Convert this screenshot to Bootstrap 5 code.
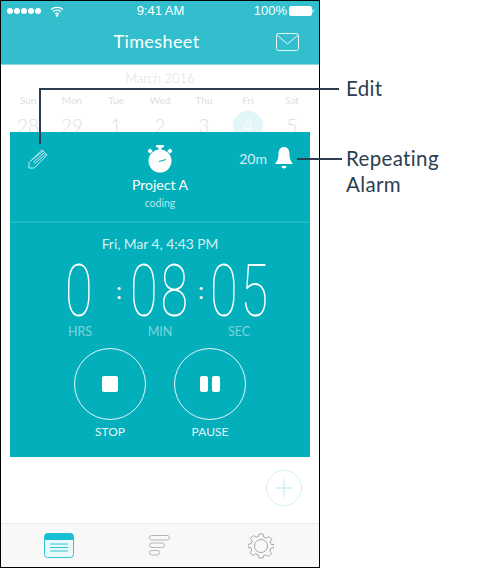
<!DOCTYPE html>
<html lang="en">
<head>
<meta charset="utf-8">
<title>Timesheet</title>
<link href="https://cdn.jsdelivr.net/npm/bootstrap@5.3.0/dist/css/bootstrap.min.css" rel="stylesheet">
<style>
    html, body { margin: 0; height: 569px; overflow: hidden; background: #fff; }
    body { font-family: Lato, "Open Sans", sans-serif; }
    .page-wrap { position: relative; width: 500px; height: 569px; }
    .phone-frame {
        width: 320px; height: 568px;
        border: 1px solid #000;
        display: flex; flex-direction: column;
        overflow: hidden;
    }
    .top-bar { background: #33bece; color: #fff; height: 64px; flex: none; border-bottom: 1px solid #8ed8e2; }
    .status-row { height: 20px; padding: 0 5px 0 6px; font-size: 13px; line-height: 20px; font-family: "Liberation Sans", sans-serif; }
    .status-row > div { flex: 1 1 0; }
    .signal-dot { width: 6px; height: 6px; background: #fff; border-radius: 50%; margin-right: 1px; }
    .batt-ico { margin-left: 2px; }
    .title-row { height: 40px; padding: 0 7px 0 0; position: relative; }
    .title-text { font-size: 18px; letter-spacing: .4px; line-height: 1; font-weight: 400; }
    .mail-icon { position: absolute; right: 19px; top: 11px; }
    .cal-strip { height: 67px; flex: none; overflow: hidden; color: #e0e0e0; text-align: center; }
    .cal-month { font-size: 13px; line-height: 16px; padding-top: 5px; font-weight: 300; }
    .cal-grid { display: grid; grid-template-columns: repeat(7, 44px); padding-left: 5px; }
    .cal-wd { font-size: 10px; line-height: 14px; margin-top: 7px; }
    .cal-day { font-size: 19px; font-weight: 300; line-height: 30px; margin-top: 4px; height: 30px; }
    .cal-today { width: 30px; height: 30px; border-radius: 50%; background: #e2f5f8; color: #fff; margin: 4px auto 0; }
    .timer-panel { background: #03afbb; color: #fff; height: 325px; margin: 0 9px; flex: none; width: 300px; }
    .panel-top { height: 91px; border-bottom: 2px solid #22b8c3; position: relative; text-align: center; padding-top: 13px; }
    .edit-ico { position: absolute; left: 18px; top: 16px; }
    .alarm-wrap { position: absolute; right: 17px; top: 14px; font-size: 14px; line-height: 1; color: #d6f1f3; }
    .proj-name { font-size: 14px; line-height: 18px; margin-top: 3px; }
    .proj-sub { font-size: 10.500px; line-height: 14px; color: #b5e5e9; margin-top: 2px; }
    .panel-date { font-size: 13.800px; line-height: 16px; text-align: center; margin-top: 13px; color: #d6f1f3; }
    .clock-row { height: 58px; margin-top: 10px; position: relative; font-family: Roboto, sans-serif; font-weight: 100; font-size: 72px; line-height: 58px; }
    .clock-part { position: absolute; top: 1px; letter-spacing: 4px; transform: scaleX(.7); transform-origin: left center; }
    .clock-colon { position: absolute; top: 0; font-family: Lato, sans-serif; font-size: 24px; font-weight: 400; line-height: 56px; }
    .unit-row { font-size: 12.500px; line-height: 14px; color: #7ed3da; position: relative; height: 14px; margin-top: 5px; }
    .unit-lbl { position: absolute; width: 40px; text-align: center; top: 0; }
    .btn-row { margin-top: 9px; padding-left: 64px; gap: 28px; }
    .ring-btn { width: 72px; text-align: center; font-size: 12px; line-height: 14px; color: #e4f6f7; }
    .ring-circle { width: 72px; height: 72px; border: 1px solid #e4f6f7; border-radius: 50%; margin-bottom: 5px; background: transparent; padding: 0; }
    .stop-sq { width: 16px; height: 16px; background: #fff; border-radius: 2px; }
    .pause-bar { width: 8px; height: 16px; background: #fff; border-radius: 2px; }
    .phone-body { flex: 1 1 auto; position: relative; }
    .add-btn { position: absolute; right: 17px; top: 13px; width: 36px; height: 36px; border: 1px solid #d6f2f5; border-radius: 50%; background: #fff; padding: 0; }
    .tab-strip { height: 44px; flex: none; background: #f8f8f8; border-top: 1px solid #ececec; padding: 0 8px 0 7px; }
    .tab-slot { flex: 1 1 0; }
    .note-text { position: absolute; left: 346px; color: #2c3e50; font-size: 20.500px; line-height: 26px; letter-spacing: .35px; }
    .note-line { position: absolute; background: #2c3e50; }
</style>
</head>
<body>
<div class="page-wrap">
    <div class="phone-frame">
        <div class="top-bar">
            <div class="status-row d-flex align-items-center">
                <div class="d-flex align-items-center">
                    <span class="signal-dot"></span><span class="signal-dot"></span><span class="signal-dot"></span><span class="signal-dot"></span><span class="signal-dot"></span>
                    <svg class="ms-2" width="14" height="11" viewBox="0 0 14 11" fill="none" stroke="#fff" stroke-width="1.300"><path d="M1 3.600C4.500.6 9.500.6 13 3.600"/><path d="M3 5.800c2.400-2 5.600-2 8 0"/><path d="M5 8c1.200-1 2.800-1 4 0"/><circle cx="7" cy="9.600" r=".6" fill="#fff"/></svg>
                </div>
                <div class="text-center">9:41 AM</div>
                <div class="d-flex align-items-center justify-content-end">100%
                    <svg class="batt-ico" width="25" height="10" viewBox="0 0 25 10"><rect x=".5" y=".5" width="22" height="9" rx="1.500" fill="#fff" stroke="#fff"/><rect x="23.500" y="3.500" width="1" height="3" fill="#fff"/></svg>
                </div>
            </div>
            <div class="title-row d-flex align-items-center justify-content-center">
                <div class="title-text">Timesheet</div>
                <svg class="mail-icon" width="24" height="20" viewBox="0 0 24 20" fill="none" stroke="#e6f7f9" stroke-width="1"><rect x=".5" y="1.500" width="22" height="17" rx="2"/><path d="M1 3l10.500 9L22 3"/></svg>
            </div>
        </div>

        <div class="cal-strip">
            <div class="cal-month">March 2016</div>
            <div class="cal-grid">
                <div class="cal-wd">Sun</div><div class="cal-wd">Mon</div><div class="cal-wd">Tue</div><div class="cal-wd">Wed</div><div class="cal-wd">Thu</div><div class="cal-wd">Fri</div><div class="cal-wd">Sat</div>
                <div class="cal-day">28</div><div class="cal-day">29</div><div class="cal-day">1</div><div class="cal-day">2</div><div class="cal-day">3</div><div class="cal-day cal-today">4</div><div class="cal-day">5</div>
            </div>
        </div>

        <div class="timer-panel">
            <div class="panel-top">
                <svg class="edit-ico" width="21" height="21" viewBox="0 0 22 22" fill="none" stroke="#cdeef1" stroke-width="1"><path d="M1 15.500L14.500 2l5.500 5.500L6.500 21H1z"/><path d="M3.300 13.200L15.800 3.300M5.300 15.200L17.300 4.800M6.800 16.700L18.800 6.300"/></svg>
                <svg width="24" height="28" viewBox="0 0 24 28"><rect x="8" y="0" width="8" height="2.500" rx="1" fill="#fff"/><rect x="10.500" y="2" width="3" height="3" fill="#fff"/><rect x="0" y="4" width="4" height="4" rx="1" transform="rotate(-45 2 6)" fill="#fff"/><rect x="20" y="4" width="4" height="4" rx="1" transform="rotate(45 22 6)" fill="#fff"/><circle cx="12" cy="16" r="11.500" fill="#fff"/><path d="M11 16.500l7-2" stroke="#03afbb" stroke-width="1.300"/></svg>
                <div class="proj-name">Project A</div>
                <div class="proj-sub">coding</div>
                <div class="alarm-wrap d-flex align-items-center gap-2">
                    <span>20m</span>
                    <svg width="18" height="25" viewBox="0 0 18 25"><path d="M9 1c-3.800 0-5.500 3-5.500 7 0 5-1.500 7.500-3.500 10h18c-2-2.500-3.500-5-3.500-10 0-4-1.700-7-5.500-7z" fill="#fff"/><path d="M6.500 20h5c0 1.500-1 2.500-2.500 2.500S6.500 21.500 6.500 20z" fill="#fff"/></svg>
                </div>
            </div>
            <div class="panel-date">Fri, Mar 4, 4:43 PM</div>
            <div class="clock-row">
                <span class="clock-part" style="left:55px">0</span>
                <span class="clock-colon" style="left:106px">:</span>
                <span class="clock-part" style="left:120px">08</span>
                <span class="clock-colon" style="left:188px">:</span>
                <span class="clock-part" style="left:200px">05</span>
            </div>
            <div class="unit-row">
                <span class="unit-lbl" style="left:50px">HRS</span>
                <span class="unit-lbl" style="left:130px">MIN</span>
                <span class="unit-lbl" style="left:209px">SEC</span>
            </div>
            <div class="btn-row d-flex">
                <div class="ring-btn">
                    <button type="button" class="ring-circle d-flex align-items-center justify-content-center"><span class="stop-sq"></span></button>
                    STOP
                </div>
                <div class="ring-btn">
                    <button type="button" class="ring-circle d-flex align-items-center justify-content-center gap-1"><span class="pause-bar"></span><span class="pause-bar"></span></button>
                    PAUSE
                </div>
            </div>
        </div>

        <div class="phone-body">
            <button type="button" class="add-btn d-flex align-items-center justify-content-center">
                <svg width="18" height="18" viewBox="0 0 18 18" stroke="#cdf0f4" stroke-width="1.300"><path d="M9 0v18M0 9h18"/></svg>
            </button>
        </div>

        <div class="tab-strip d-flex align-items-center">
            <div class="tab-slot d-flex justify-content-center">
                <svg width="30" height="25" viewBox="0 0 30 25" fill="none"><rect x=".5" y=".5" width="29" height="24" rx="3" fill="#eafafc" stroke="#2fc6d8"/><path d="M.5 7V3.500a3 3 0 0 1 3-3h23a3 3 0 0 1 3 3V7z" fill="#17bfd3"/><path d="M6 11h18M6 14.500h18M6 18h18" stroke="#2fc6d8" stroke-width="1.200"/></svg>
            </div>
            <div class="tab-slot d-flex justify-content-center">
                <svg width="22" height="21" viewBox="0 0 22 21" fill="none" stroke="#b4b4b4" stroke-width="1"><rect x=".5" y=".5" width="20" height="4.500" rx="2.200"/><rect x=".5" y="8" width="15" height="4.500" rx="2.200"/><rect x=".5" y="15.500" width="10" height="4.500" rx="2.200"/></svg>
            </div>
            <div class="tab-slot d-flex justify-content-center">
                <svg width="26" height="26" viewBox="0 0 26 26" fill="none" stroke="#a8a8a8" stroke-width="1"><circle cx="13" cy="13" r="6.500"/><path d="M11 1h4l.8 3.200 2.500 1 2.800-1.700 2.800 2.800-1.700 2.800 1 2.500L26 11.400v3.200l-3.200.8-1 2.500 1.700 2.800-2.800 2.800-2.800-1.700-2.500 1L15 25h-4l-.8-3.100-2.500-1-2.800 1.700-2.800-2.800 1.700-2.800-1-2.500L0 14.600v-3.200l3.200-.8 1-2.500L2.500 5.300l2.800-2.800 2.800 1.700 2.500-1z"/></svg>
            </div>
        </div>
    </div>

    <!-- callouts -->
    <div class="note-line" style="left:40px;top:88px;width:299px;height:2px"></div>
    <div class="note-line" style="left:39px;top:88px;width:2px;height:56px"></div>
    <div class="note-line" style="left:297px;top:158px;width:45px;height:2px"></div>
    <div class="note-text" style="top:75px">Edit</div>
    <div class="note-text" style="top:145px">Repeating<br>Alarm</div>
</div>
<script src="https://cdn.jsdelivr.net/npm/bootstrap@5.3.0/dist/js/bootstrap.bundle.min.js"></script>
</body>
</html>
